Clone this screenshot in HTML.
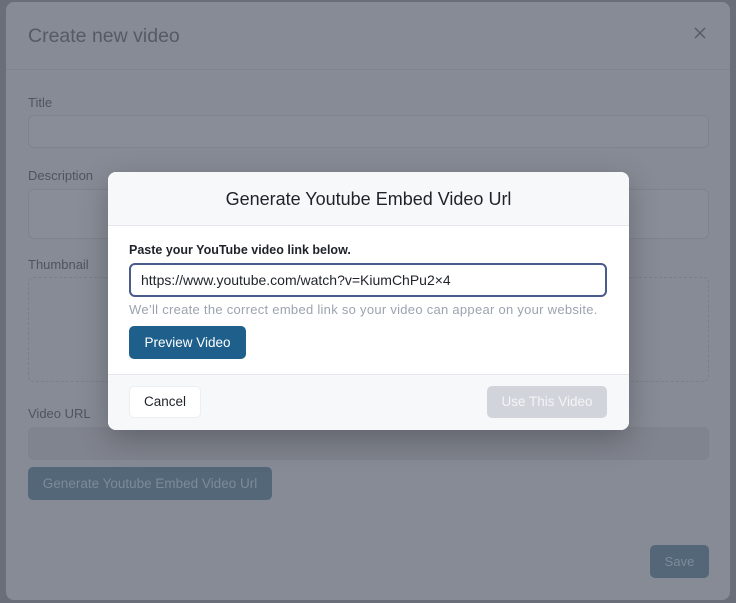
<!DOCTYPE html><html><head><style>
*{box-sizing:border-box;margin:0;padding:0}
body{width:736px;height:603px;background:#6a6e79;font-family:"Liberation Sans",sans-serif;position:relative;overflow:hidden}
.a{position:absolute}
.panel{left:6px;top:2px;width:724px;height:598px;background:#878b95;border-radius:8px}
.lbl{font-size:13px;color:#4f545e}
.inp{border:1px solid #7f838d;border-radius:6px;background:#898d97}
.m{left:108px;top:172px;width:521px;height:258px;background:#fff;border-radius:8px;overflow:hidden;box-shadow:0 10px 30px rgba(0,0,0,.25)}
</style></head><body>
<div class="a panel"></div>
<div class="a" style="left:28px;top:25px;font-size:19.5px;color:#555a65">Create new video</div>
<svg class="a" style="left:693px;top:26px" width="14" height="14" viewBox="0 0 14 14"><path d="M2 2L12 12M12 2L2 12" stroke="#555a65" stroke-width="1.4"/></svg>
<div class="a" style="left:6px;top:69px;width:724px;height:1px;background:#80848e"></div>
<div class="a lbl" style="left:28px;top:95px">Title</div>
<div class="a inp" style="left:28px;top:115px;width:681px;height:33px"></div>
<div class="a lbl" style="left:28px;top:168px">Description</div>
<div class="a inp" style="left:28px;top:189px;width:681px;height:50px"></div>
<div class="a lbl" style="left:28px;top:257px">Thumbnail</div>
<div class="a" style="left:28px;top:277px;width:681px;height:105px;border:1px dashed #7b7f89;border-radius:6px"></div>
<div class="a lbl" style="left:28px;top:406px">Video URL</div>
<div class="a inp" style="left:28px;top:427px;width:681px;height:33px;background:#80848e"></div>
<div class="a" style="left:28px;top:467px;width:244px;height:33px;background:#536779;border-radius:5px;color:#7d8b9a;font-size:13.5px;line-height:33px;text-align:center">Generate Youtube Embed Video Url</div>
<div class="a" style="left:650px;top:545px;width:59px;height:33px;background:#536779;border-radius:5px;color:#7d8b9a;font-size:13px;line-height:33px;text-align:center">Save</div>
<div class="a m">
<div style="height:54px;background:#f7f8fa;border-bottom:1px solid #e5e7eb;text-align:center;font-size:18px;line-height:54px;color:#1f2329">Generate Youtube Embed Video Url</div>
<div class="a" style="left:21px;top:71px;font-size:12.5px;font-weight:bold;color:#1f2329">Paste your YouTube video link below.</div>
<div class="a" style="left:21px;top:91px;width:478px;height:34px;border:2px solid #4b5b8a;border-radius:6px;font-size:14px;line-height:30px;padding-left:10px;color:#1f2329">https://www.youtube.com/watch?v=KiumChPu2×4</div>
<div class="a" style="left:21px;top:130px;font-size:13px;letter-spacing:0.28px;color:#9ca3af">We’ll create the correct embed link so your video can appear on your website.</div>
<div class="a" style="left:21px;top:154px;width:117px;height:33px;background:#1f5f8b;border-radius:5px;color:#fff;font-size:13.5px;line-height:33px;text-align:center">Preview Video</div>
<div class="a" style="left:0;top:202px;width:521px;height:56px;background:#f7f8fa;border-top:1px solid #e5e7eb"></div>
<div class="a" style="left:21px;top:214px;width:72px;height:32px;background:#fff;border:1px solid #eceef1;border-radius:5px;font-size:13.5px;line-height:30px;text-align:center;color:#1f2329">Cancel</div>
<div class="a" style="left:379px;top:214px;width:120px;height:32px;background:#d1d5db;border-radius:5px;font-size:13.5px;line-height:32px;text-align:center;color:#f3f4f6">Use This Video</div>
</div>
</body></html>
